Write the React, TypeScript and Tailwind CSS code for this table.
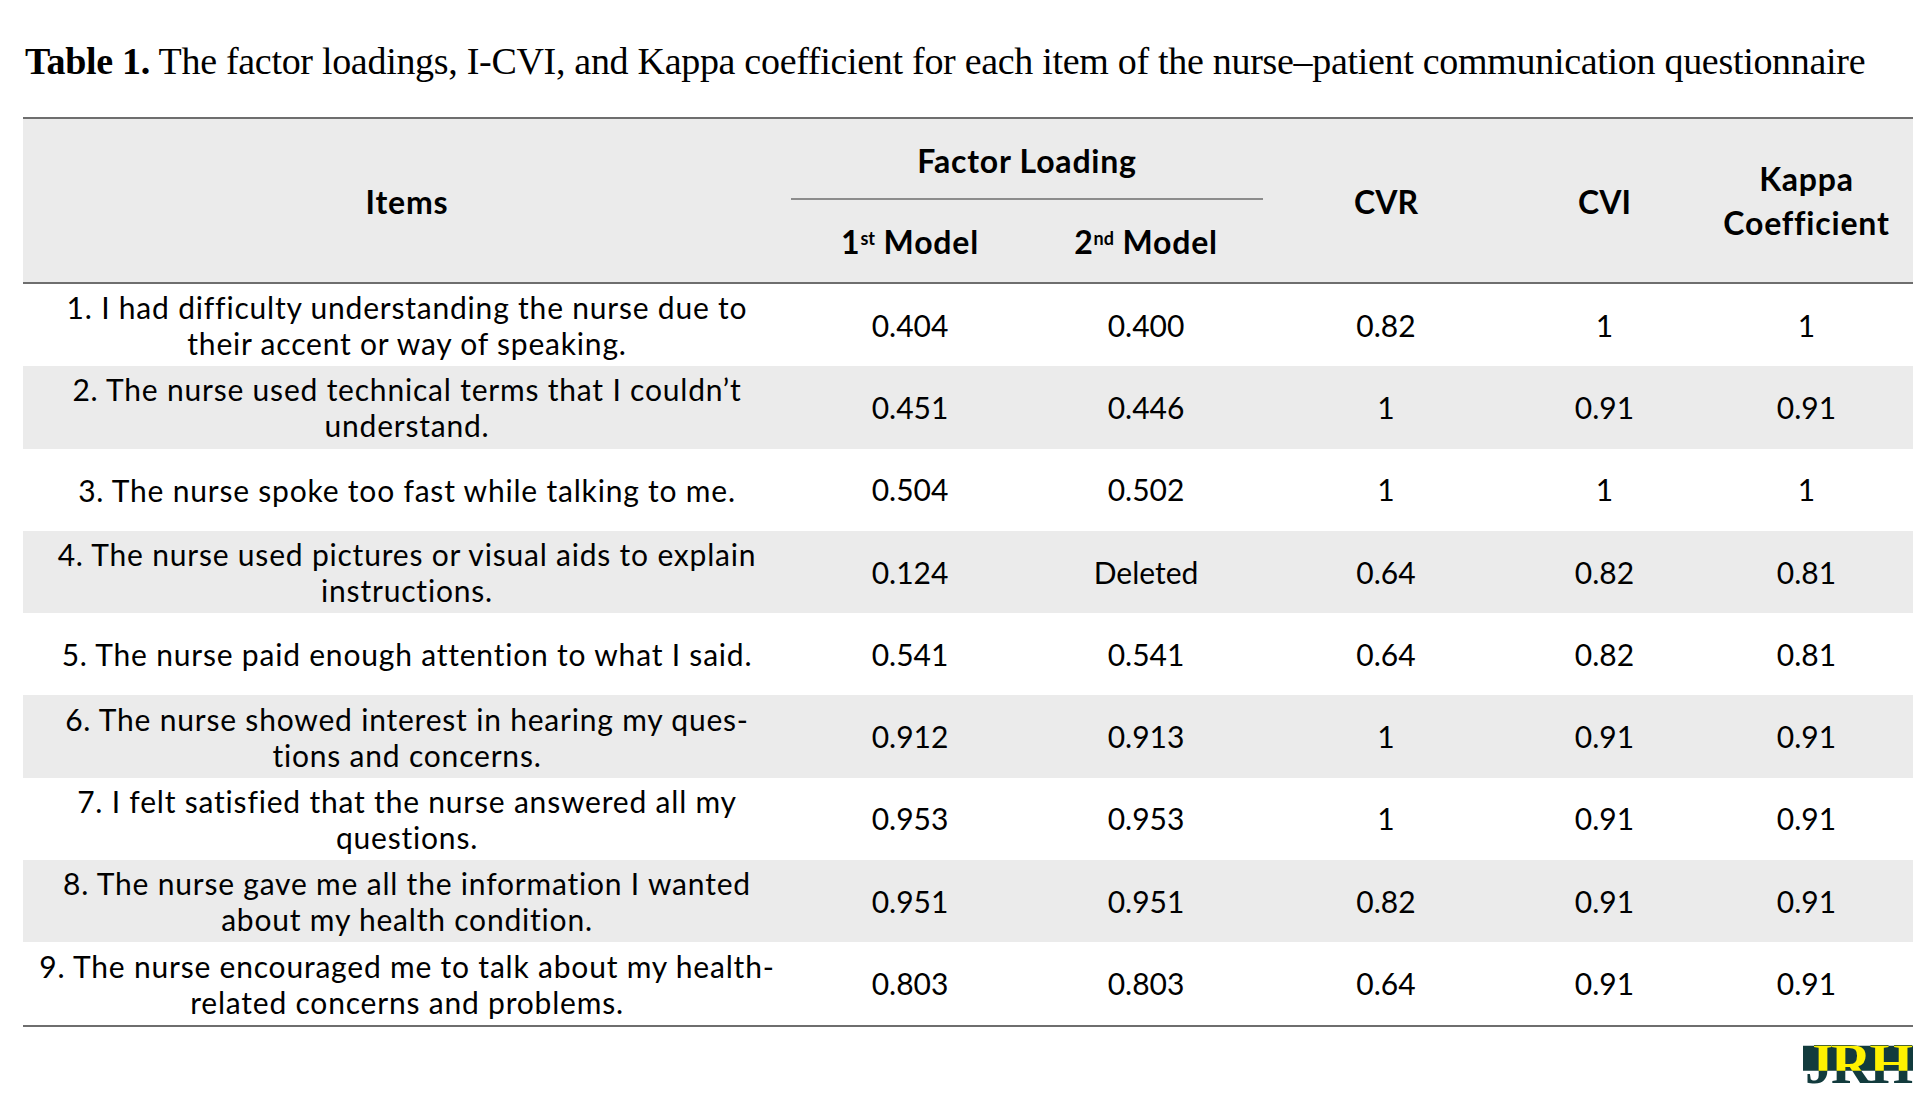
import React from "react";

const rows: { lines: string[]; v: string[] }[] = [
  { lines: ["1. I had difficulty understanding the nurse due to", "their accent or way of speaking."], v: ["0.404", "0.400", "0.82", "1", "1"] },
  { lines: ["2. The nurse used technical terms that I couldn’t", "understand."], v: ["0.451", "0.446", "1", "0.91", "0.91"] },
  { lines: ["3. The nurse spoke too fast while talking to me."], v: ["0.504", "0.502", "1", "1", "1"] },
  { lines: ["4. The nurse used pictures or visual aids to explain", "instructions."], v: ["0.124", "Deleted", "0.64", "0.82", "0.81"] },
  { lines: ["5. The nurse paid enough attention to what I said."], v: ["0.541", "0.541", "0.64", "0.82", "0.81"] },
  { lines: ["6. The nurse showed interest in hearing my ques-", "tions and concerns."], v: ["0.912", "0.913", "1", "0.91", "0.91"] },
  { lines: ["7. I felt satisfied that the nurse answered all my", "questions."], v: ["0.953", "0.953", "1", "0.91", "0.91"] },
  { lines: ["8. The nurse gave me all the information I wanted", "about my health condition."], v: ["0.951", "0.951", "0.82", "0.91", "0.91"] },
  { lines: ["9. The nurse encouraged me to talk about my health-", "related concerns and problems."], v: ["0.803", "0.803", "0.64", "0.91", "0.91"] },
];

const cols = "grid grid-cols-[768px_238px_234px_246px_191px_213px]";

export default function App() {
  return (
    <div className="w-[1932px] h-[1103px] bg-white text-black overflow-hidden">
      <div className="pl-[25px] pt-[39px] h-[117px] font-['Liberation_Serif',serif] text-[38px] leading-[44px] tracking-[-0.3px] whitespace-nowrap">
        <span className="font-bold">Table 1.</span> The factor loadings, I-CVI, and Kappa coefficient for each item of the nurse–patient communication questionnaire
      </div>
      <div className="ml-[23px] w-[1890px] font-['Lato',sans-serif]">
        <div className="border-t-2 border-b-2 border-[#6e6e6e] bg-[#ebebeb]">
          <div className={`${cols} grid-rows-[81px_82px] font-bold text-[32px] tracking-[0.8px]`}>
            <div className="row-span-2 flex items-center justify-center pt-[3px]">Items</div>
            <div className="col-span-2 flex items-center justify-center border-b-2 border-[#8c8c8c] pt-[4px]">Factor Loading</div>
            <div className="row-span-2 flex items-center justify-center pt-[3px] tracking-normal">CVR</div>
            <div className="row-span-2 flex items-center justify-center pt-[3px] tracking-normal">CVI</div>
            <div className="row-span-2 flex flex-col items-center justify-center leading-[44px] pt-[1px]">
              <span>Kappa</span>
              <span>Coefficient</span>
            </div>
            <div className="flex items-center justify-center pt-[2px]">
              1<sup className="text-[18px] font-bold relative -top-[4px] tracking-normal">st</sup>&nbsp;Model
            </div>
            <div className="flex items-center justify-center pt-[2px]">
              2<sup className="text-[18px] font-bold relative -top-[4px] tracking-normal">nd</sup>&nbsp;Model
            </div>
          </div>
        </div>
        <div className="border-b-2 border-[#6e6e6e] text-[30px]">
          {rows.map((r, i) => (
            <div key={i} className={`${cols} h-[82.3px] ${i % 2 === 1 ? "bg-[#ebebeb]" : "bg-white"}`}>
              <div className="flex flex-col items-center justify-center leading-[36px] tracking-[0.8px] whitespace-nowrap">
                {r.lines.map((l, j) => (
                  <span key={j}>{l}</span>
                ))}
              </div>
              {r.v.map((x, j) => (
                <div key={j} className="flex items-center justify-center">
                  {x}
                </div>
              ))}
            </div>
          ))}
        </div>
        <div className="flex justify-end pt-[9px]">
          <div className="relative h-[56px] w-[110px] font-['Liberation_Serif',serif] font-bold text-[56px] leading-[56px] text-[#123b3d]">
            <span className="block text-center tracking-[-2px]">JRH</span>
            <div className="absolute inset-0 bg-[#123b3d] [clip-path:inset(10px_0_21px_0)]">
              <span className="block text-center tracking-[-2px] text-[#fff200]">JRH</span>
            </div>
          </div>
        </div>
      </div>
    </div>
  );
}
